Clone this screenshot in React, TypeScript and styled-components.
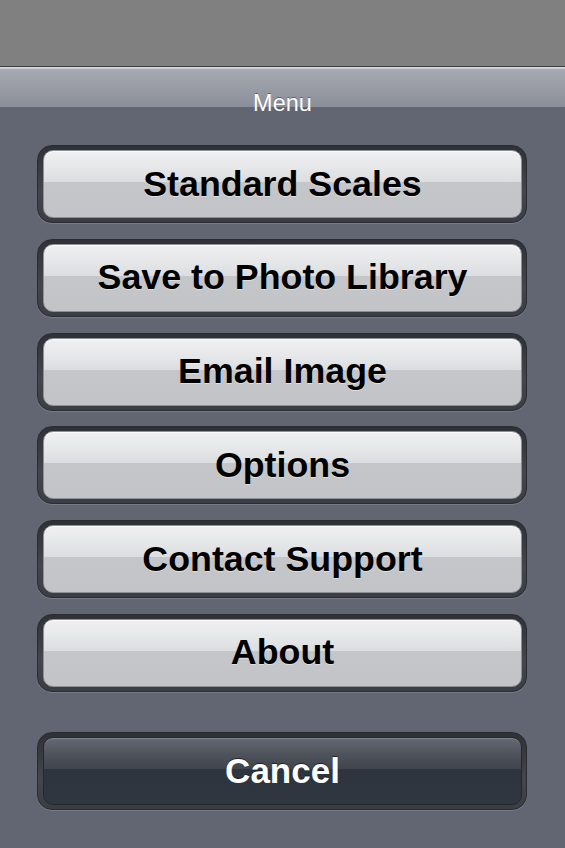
import React from "react";
import styled, { createGlobalStyle } from "styled-components";

const GlobalStyle = createGlobalStyle`
  html, body {
    margin: 0;
    padding: 0;
    background: #626672;
  }
  * { box-sizing: border-box; }
`;

const Screen = styled.div`
  width: 565px;
  height: 848px;
  display: flex;
  flex-direction: column;
  overflow: hidden;
  font-family: "Liberation Sans", Helvetica, Arial, sans-serif;
`;

const Backdrop = styled.div`
  height: 67px;
  background: #808080;
  border-bottom: 1px solid #3c3e43;
  flex-shrink: 0;
`;

const Sheet = styled.div`
  flex: 1;
  display: flex;
  flex-direction: column;
  background: linear-gradient(
    to bottom,
    #dcdee2 0px,
    #c4c6cb 2px,
    #a7aab2 2px,
    #8a8e98 40px,
    #626672 40px,
    #626672 100%
  );
`;

const Title = styled.div`
  padding-top: 23px;
  text-align: center;
  font-size: 23.5px;
  line-height: 26px;
  font-weight: 400;
  color: #ffffff;
  text-shadow: 0 -1px 0 rgba(0, 0, 0, 0.35);
`;

const MenuList = styled.div`
  display: flex;
  flex-direction: column;
  gap: 15.8px;
  padding: 29px 38px 0 37px;
`;

const Well = styled.div<{ $spaced?: boolean }>`
  height: 78px;
  padding: 4px 4px 4px 5px;
  border-radius: 15px;
  border: 1px solid #2a2c32;
  background: linear-gradient(to bottom, #2f3137 0%, #43464e 60%, #3a3d44 100%);
  box-shadow: 0 1px 0 rgba(255, 255, 255, 0.14);
  margin-top: ${(p) => (p.$spaced ? "24px" : "0")};
`;

const MenuButton = styled.button<{ $dark?: boolean }>`
  width: 100%;
  height: 100%;
  margin: 0;
  padding: 0;
  border: 1px solid ${(p) => (p.$dark ? "#23272e" : "#8d9096")};
  border-radius: 10px;
  display: flex;
  align-items: center;
  justify-content: center;
  font-family: inherit;
  font-weight: 700;
  font-size: ${(p) => (p.$dark ? "35px" : "35.8px")};
  color: ${(p) => (p.$dark ? "#ffffff" : "#000000")};
  text-shadow: ${(p) =>
    p.$dark ? "0 -1px 0 rgba(0,0,0,0.55)" : "0 1px 0 rgba(255,255,255,0.45)"};
  background: ${(p) =>
    p.$dark
      ? "linear-gradient(to bottom, #646973 0%, #4d525b 25%, #3f444d 47%, #2e343d 47%, #313740 100%)"
      : "linear-gradient(to bottom, #f0f0f2 0%, #e6e7e9 25%, #dcdde0 47%, #c5c6ca 47%, #c3c4c8 100%)"};
  box-shadow: inset 0 1px 0
    ${(p) => (p.$dark ? "rgba(255,255,255,0.18)" : "rgba(255,255,255,0.8)")};
  cursor: pointer;
`;

const items = [
  "Standard Scales",
  "Save to Photo Library",
  "Email Image",
  "Options",
  "Contact Support",
  "About",
];

export default function App() {
  return (
    <>
      <GlobalStyle />
      <Screen>
        <Backdrop />
        <Sheet>
          <Title>Menu</Title>
          <MenuList>
            {items.map((label) => (
              <Well key={label}>
                <MenuButton>{label}</MenuButton>
              </Well>
            ))}
            <Well $spaced>
              <MenuButton $dark>Cancel</MenuButton>
            </Well>
          </MenuList>
        </Sheet>
      </Screen>
    </>
  );
}
